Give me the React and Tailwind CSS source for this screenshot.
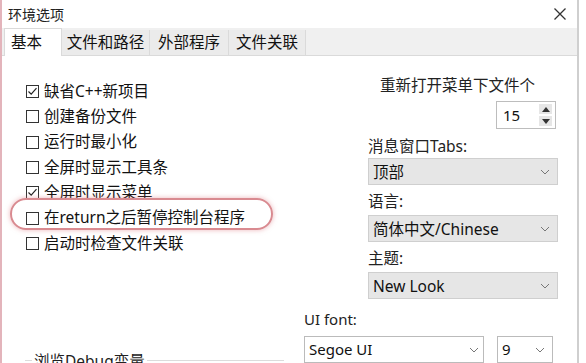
import React from "react";

const font = { fontFamily: '"Noto Sans", "Noto Sans CJK SC", sans-serif' };

function Check({ checked }) {
  return (
    <span className="w-[13px] h-[13px] border border-[#333] bg-white flex items-center justify-center shrink-0">
      {checked && (
        <svg width="11" height="11" viewBox="0 0 11 11">
          <path d="M1.5 5.5 L4.2 8.2 L9.5 2.2" fill="none" stroke="#222" strokeWidth="1.2" />
        </svg>
      )}
    </span>
  );
}

function Row({ checked, label }) {
  return (
    <div className="flex items-center gap-[5px] h-[25.3px]">
      <Check checked={checked} />
      <span className="text-[15.5px] text-[#111] leading-none">{label}</span>
    </div>
  );
}

function Chevron() {
  return (
    <svg width="10" height="6" viewBox="0 0 10 6">
      <path d="M1 1 L5 5 L9 1" fill="none" stroke="#777" strokeWidth="1" />
    </svg>
  );
}

function Select({ value }) {
  return (
    <div className="flex items-center justify-between pl-[4px] pr-[5px] h-[27px] border border-[#cfcfcf] bg-[#e6e6e6] ml-[68px] mr-[19px] mt-[4px]">
      <span className="text-[15.5px] text-[#111] leading-[20px]">{value}</span>
      <span className="mr-[2px]"><Chevron /></span>
    </div>
  );
}

function Label({ children }) {
  return <div className="pl-[68px] mt-[6px] text-[15.5px] leading-[20px] text-[#222]">{children}</div>;
}

function Tab({ w, children }) {
  return (
    <div className={"h-[25px] flex items-center justify-center border-r border-[#dadada] bg-[#ebebeb] " + w}>
      <span className="text-[15.5px] text-[#111] leading-none">{children}</span>
    </div>
  );
}

export default function App() {
  const rows = [
    [true, "缺省C++新项目"],
    [false, "创建备份文件"],
    [false, "运行时最小化"],
    [false, "全屏时显示工具条"],
    [true, "全屏时显示菜单"],
    [false, "在return之后暂停控制台程序"],
    [false, "启动时检查文件关联"],
  ];
  return (
    <div style={font} className="w-[586px] h-[363px] overflow-hidden bg-white relative flex">
      <div className="w-[2px] bg-[#e3b4bb] shrink-0" />
      <div className="w-[577px] flex flex-col border-r-[2px] border-[#cfcfcf] bg-white">
        {/* title bar */}
        <div className="h-[29px] flex items-center justify-between pl-[6px] pr-[10px]">
          <span className="text-[14px] text-[#222]">环境选项</span>
          <svg width="14" height="14" viewBox="0 0 14 14">
            <path d="M1.5 1.5 L12.5 12.5 M12.5 1.5 L1.5 12.5" stroke="#333" strokeWidth="1.3" />
          </svg>
        </div>
        {/* tabs */}
        <div className="flex items-end h-[28px] bg-[#f0f0f0] border-b border-[#dadada] relative">
          <div className="h-[28px] px-[6px] flex items-center bg-white border border-b-0 border-[#dadada] relative top-[1px] ml-[2px] w-[58px]">
            <span className="text-[15.5px] text-[#111] leading-none">基本</span>
          </div>
          <Tab w="w-[88px]">文件和路径</Tab>
          <Tab w="w-[79px]">外部程序</Tab>
          <Tab w="w-[77px]">文件关联</Tab>
        </div>
        {/* body */}
        <div className="flex flex-1">
          <div className="w-[298px] flex flex-col pl-[24px] pt-[23px] relative">
            {rows.map(([c, l], i) => (
              <Row key={i} checked={c} label={l} />
            ))}
            <div className="absolute left-[8px] top-[142px] w-[263px] h-[32px] rounded-full border-[2px] border-[#d98a90] shadow-[0_0_5px_rgba(220,120,130,0.55)]" />
            <div className="mt-auto flex items-center ml-[-1px] mb-[-10px]">
              <div className="w-[7px] h-[2px] border-t border-[#dcdcdc] border-b border-b-white" />
              <span className="text-[15.5px] text-[#222] px-[2px]">浏览Debug变量</span>
              <div className="flex-1 h-[2px] border-t border-[#dcdcdc] border-b border-b-white mr-[16px]" />
            </div>
          </div>
          <div className="flex-1 flex flex-col pt-[19px]">
            <div className="pl-[80px] text-[15.5px] leading-[20px] text-[#222]">重新打开菜单下文件个</div>
            <div className="flex justify-end pr-[21px] mt-[6px]">
              <div className="w-[60px] h-[28px] border border-[#bdbdbd] flex items-center justify-between pl-[6px] pr-[3px]">
                <span className="text-[15px] text-[#111]">15</span>
                <div className="flex flex-col gap-[2px]">
                  <div className="w-[13px] h-[10px] bg-[#e6e6e6] flex items-center justify-center">
                    <svg width="8" height="5" viewBox="0 0 8 5"><path d="M0 5 L4 0 L8 5Z" fill="#333" /></svg>
                  </div>
                  <div className="w-[13px] h-[10px] bg-[#e6e6e6] flex items-center justify-center">
                    <svg width="8" height="5" viewBox="0 0 8 5"><path d="M0 0 L4 5 L8 0Z" fill="#333" /></svg>
                  </div>
                </div>
              </div>
            </div>
            <div className="pl-[68px] mt-[7px] text-[15.5px] leading-[20px] text-[#222]">消息窗口Tabs:</div>
            <div className="flex items-center justify-between pl-[4px] pr-[5px] h-[27px] border border-[#cfcfcf] bg-[#e6e6e6] ml-[68px] mr-[19px] mt-[2px]">
              <span className="text-[15.5px] text-[#111] leading-[20px]">顶部</span>
              <span className="mr-[2px]"><Chevron /></span>
            </div>
            <Label>语言:</Label>
            <Select value="简体中文/Chinese" />
            <Label>主题:</Label>
            <Select value="New Look" />
            <div className="pl-[4px] mt-[10px] text-[15px] leading-[20px] text-[#222]">UI font:</div>
            <div className="flex ml-[4px] mt-[7px] gap-[13px]">
              <div className="w-[180px] h-[27px] border border-[#bbb] bg-white flex items-center justify-between px-[4px]">
                <span className="text-[15px] text-[#111]">Segoe UI</span>
                <Chevron />
              </div>
              <div className="w-[56px] h-[27px] border border-[#bbb] bg-white flex items-center justify-between px-[4px]">
                <span className="text-[15px] text-[#111]">9</span>
                <span className="mr-[3px]"><Chevron /></span>
              </div>
            </div>
          </div>
        </div>
      </div>
    </div>
  );
}
